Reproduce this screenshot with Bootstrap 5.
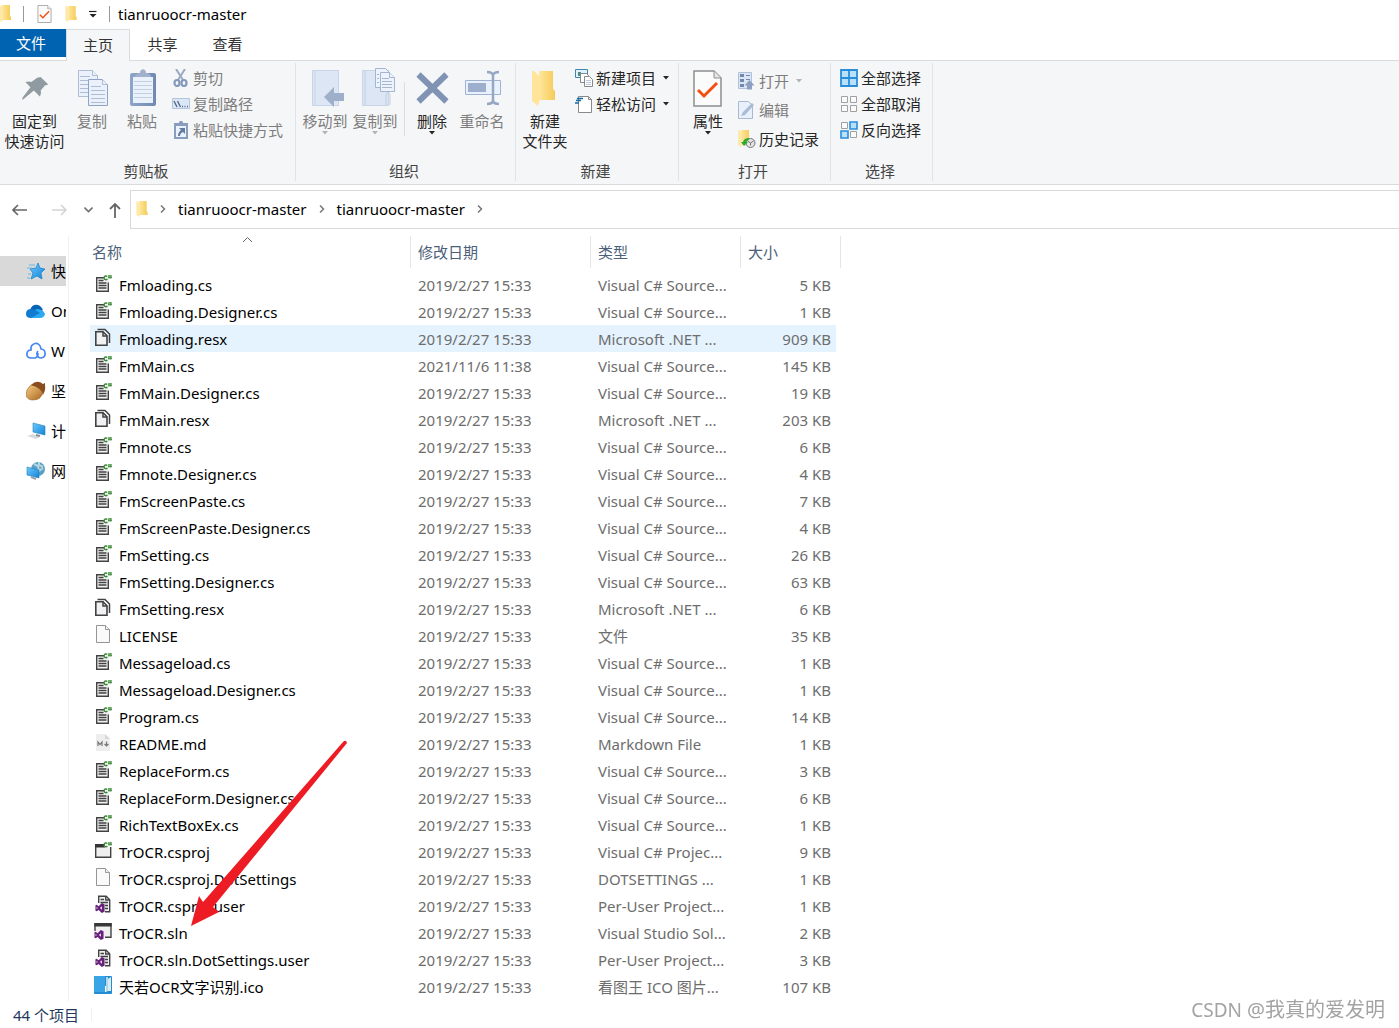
<!DOCTYPE html>
<html lang="zh-CN">
<head>
<meta charset="utf-8">
<meta name="viewport" content="width=device-width, initial-scale=1">
<title>tianruoocr-master</title>
<link href="https://cdn.jsdelivr.net/npm/bootstrap@5.3.0/dist/css/bootstrap.min.css" rel="stylesheet">
<style>
body{font-family:"Noto Sans","Noto Sans CJK SC",sans-serif;font-size:15px;line-height:20px;color:#000;background:#fff}
button{font:inherit;border:0;background:none;padding:0;color:inherit}
svg{display:block;flex:none}
a{color:inherit;text-decoration:none}
.titlebar{height:29px;gap:12px;padding-bottom:2px}
.titlebar .caption{margin-left:-4px}
.vline{width:1px;height:16px;background:#999}
.tabstrip{height:32px;border-bottom:1px solid #dadbdc}
.tabstrip button{width:65px;height:32px;padding-bottom:2px;color:#333}
.tabstrip .filetab{width:66px;height:28px;padding:0 4px 0 0;background:#0063b1;color:#fff}
.tabstrip .hometab{width:64px;border:1px solid #dadbdc;border-bottom:0;background:#f5f6f7}
.ribbon{height:124px;background:#f5f6f7;border-bottom:1px solid #dadbdc;color:#262626}
.rgroup{height:118px;margin-top:2px;border-right:1px solid #e2e3e4}
.rgroup h2{font-size:15px;line-height:20px;font-weight:400;margin:0;padding-right:3px;color:#444;text-align:center}
.g-clip{width:296px}
.g-org{width:220px}
.g-new{width:163px}
.g-open{width:152px}
.g-sel{width:102px}
.tools{padding-left:4px}
.g-clip .tools{padding-left:2px}
.bigbtn{width:50px;height:84px;padding-top:5px;display:flex;flex-direction:column;align-items:center;white-space:nowrap}
.bigbtn svg.pic{width:40px;height:40px;margin-bottom:3px}
.bigbtn.wide{width:65px}
.smallcol{display:flex;flex-direction:column;padding:2px 0 0 5px}
.smallcol button{height:26px;display:flex;align-items:center;gap:3px;white-space:nowrap}
.smallcol.loose{padding-top:3px}
.smallcol.loose button{height:29px}
.off{color:#7d7d7d!important}
.inner-rule{width:1px;height:54px;background:#dcdddf;margin:19px 2px 0 4px}
.navrow{height:44px;padding-top:5px}
.navtools{width:130px}
.addressbar{height:39px;border:1px solid #d9d9d9;border-right:0;padding:0 0 2px 5px;gap:12px}
.sidebar{width:69px;border-right:1px solid #f0f0f0;padding-top:20px}
.sidebar a{width:66px;height:30px;margin-bottom:10px;padding-left:26px;display:flex;align-items:center;gap:5px;overflow:hidden;white-space:nowrap}
.sidebar a.active{background:#d9d9d9}
.browser{padding-top:7px}
.filetable{width:751px;table-layout:fixed;border-collapse:separate;border-spacing:0;margin:0 0 0 21px}
.filetable>thead>tr>th{height:35px;padding:0;font-weight:400;color:#4c607a;vertical-align:top;position:relative}
.filetable th>span{display:flex;align-items:center;height:32px;border-right:1px solid #e5e5e5;padding-left:7px}
.filetable th:first-child>span{padding-left:2px}
.filetable>tbody>tr>td{height:27px;padding:0 0 0 7px;white-space:nowrap;overflow:hidden;vertical-align:middle;color:#6d6d6d}
.filetable>tbody>tr>td:first-child{padding-left:4px;color:#000}
.filetable>tbody>tr>td:last-child{text-align:right;padding:0 5px 0 0;border-right:5px solid transparent;background-clip:padding-box}
.filetable>tbody>tr.hot>td{background-color:#e5f3ff}
.fname{display:flex;align-items:center;gap:7px;height:27px}
.fname svg{margin-bottom:3px}
.c-name{width:321px}.c-date{width:180px}.c-type{width:150px}.c-size{width:100px}
.sorter{position:absolute;left:152px;top:0}
.statusline{height:27px;padding-left:13px;color:#1e395b}
.statusline i{width:1px;height:13px;background:#eee;margin-left:12px}
.pointer{position:absolute;left:190px;top:738px;pointer-events:none}
.watermark{position:fixed;right:14px;bottom:4px;font-size:20px;line-height:28px;color:#a3a3a3}
.watermark span{font-size:19px}
</style>
<script src="https://cdn.jsdelivr.net/npm/bootstrap@5.3.0/dist/js/bootstrap.bundle.min.js"></script>
</head>
<body class="position-relative">
<svg width="0" height="0" class="position-absolute" aria-hidden="true">
<defs>
<linearGradient id="gold" x1="0" x2="1"><stop offset="0" stop-color="#ffe69b"/><stop offset="1" stop-color="#f5cb58"/></linearGradient>
<linearGradient id="sky" x1="0" y1="0" x2="1" y2="1"><stop offset="0" stop-color="#6dcaff"/><stop offset="1" stop-color="#0f83d8"/></linearGradient>
<linearGradient id="slate" x1="0" x2="1"><stop offset="0" stop-color="#8fa5c9"/><stop offset="1" stop-color="#7089b1"/></linearGradient>
<linearGradient id="nut" x1="0" y1="0" x2="1" y2="1"><stop offset="0" stop-color="#f7cf82"/><stop offset="1" stop-color="#a86420"/></linearGradient>
</defs>
<symbol id="folder" viewBox="0 0 12 17"><path d="M3 0h8v11l1 1v3H3z" fill="url(#gold)"/><path d="M0 0h1l3 3v11l-1 3-3-2z" fill="#ffe9a8"/></symbol>
<symbol id="f-cs" viewBox="0 0 18 20"><path d="M2.700 4.700h12v13h-12z" fill="#f1f1f1"/><path d="M10 4.700H2.700v13.600h11.600V9.500" fill="none" stroke="#424242" stroke-width="1.400"/><path d="M4.500 7.500h5M4.500 10h8M4.500 12.500h8M4.500 15h8" stroke="#424242" stroke-width="1.300"/><path d="M13.300 3.600c-1-1.200-3.200-.8-3.200 1.200s2.200 2.400 3.200 1.200" fill="none" stroke="#388a34" stroke-width="1.500"/><path d="M15 2v3.600M16.800 2v3.600M14 3h4M14 4.600h4" stroke="#388a34" stroke-width=".9"/></symbol>
<symbol id="f-resx" viewBox="0 0 18 20"><path d="M1.800 4.800h7.200l4 4v9.500H1.800z" fill="#f1f1f4" stroke="#424242" stroke-width="1.600"/><path d="M9 4.800V9h4M3.500 2.500h7.500l4.500 4.500V16" fill="none" stroke="#424242" stroke-width="1.500"/></symbol>
<symbol id="f-page" viewBox="0 0 18 20"><path d="M2.500 1.500h9l4 4v13h-13z" fill="#fafafa" stroke="#959595"/><path d="M11.500 1.500v4h4" fill="#eee" stroke="#999"/></symbol>
<symbol id="f-md" viewBox="0 0 18 20"><path d="M2 2h9l5 5v12H2z" fill="#eee"/><path d="M11 2v5h5z" fill="#d7d7d7"/><path d="M4 14v-4l2 2.500L8 10v4M12.500 9.500v4M10.500 12l2 2 2-2" fill="none" stroke="#777" stroke-width="1.200"/></symbol>
<symbol id="f-proj" viewBox="0 0 18 20"><path d="M1.700 4.700h15v12.600h-15z" fill="#efeff0" stroke="#424242" stroke-width="1.400"/><path d="M1 4h10v3.500H1z" fill="#333"/><path d="M10.500 0H18v7h-7.500z" fill="#fff"/><path d="M13.300 3.600c-1-1.200-3.200-.8-3.200 1.200s2.200 2.400 3.200 1.200" fill="none" stroke="#388a34" stroke-width="1.500"/><path d="M15 2v3.600M16.800 2v3.600M14 3h4M14 4.600h4" stroke="#388a34" stroke-width=".9"/></symbol>
<symbol id="vs" viewBox="0 0 10 11"><path fill-rule="evenodd" d="M7 0l3 1.500v8L7 11 3.500 7.600 1.300 9.200 0 8.500v-6l1.300-.7 2.200 1.700zM7 3.500L5 5.500l2 2zM1.300 4.200v2.600l1.200-1.300z" fill="#68217a"/></symbol>
<symbol id="f-user" viewBox="0 0 18 20"><path d="M4.700 9V2.200h7.500l3.500 3.500v12H11" fill="#f0f0f1" stroke="#424242" stroke-width="1.400"/><path d="M11.700 2v4h4M6.500 5.500h3.500M6.500 8.500H14M11 11.500h3M11 14.500h3" fill="none" stroke="#424242" stroke-width="1.300"/><use href="#vs" x="1" y="9" width="10" height="10"/></symbol>
<symbol id="f-sln" viewBox="0 0 18 20"><path d="M1 10V3h16v13.300h-6" fill="#f0f0f1" stroke="#424242" stroke-width="1.400"/><path d="M.3 2h17.400v3.500H.3z" fill="#383838"/><use href="#vs" x="0" y="9" width="10" height="10"/></symbol>
<symbol id="f-ico" viewBox="0 0 18 20"><rect x="0" y="1" width="18" height="18" rx="1" fill="#238cd2"/><path d="M0 2q0-1 1-1h10v16H0z" fill="#39a4e6"/><path d="M12 2h2v14l-2 1z" fill="#b2d8ed"/><path d="M14 4l3-2v14h-3z" fill="#dceaf2"/><path d="M11 11h1v6h-1z" fill="#fff"/></symbol>
<symbol id="car" viewBox="0 0 6 4"><path d="M0 0h6L3 3.500z" fill="currentColor"/></symbol>
<symbol id="chev" viewBox="0 0 6 8"><path d="M1 .5L4.500 4 1 7.500" fill="none" stroke="#777" stroke-width="1.500"/></symbol>
<symbol id="check" viewBox="0 0 29 37"><path d="M1 1h20l7 7v28H1z" fill="#fbfbfb" stroke="#8f8f8f" stroke-width="1.500"/><path d="M21 1v7h7" fill="#e5e5e5" stroke="#8f8f8f"/><path d="M5 20l6 6 13-13" fill="none" stroke="#f2500f" stroke-width="3"/></symbol>
</svg>

<div class="d-flex flex-column min-vh-100">
<header>
  <div class="titlebar d-flex align-items-center">
    <svg width="11" height="17" viewBox="1 0 11 17"><use href="#folder" width="12" height="17"/></svg>
    <span class="vline"></span>
    <button aria-label="属性"><svg width="17" height="18"><use href="#check"/></svg></button>
    <button aria-label="新建文件夹"><svg width="12" height="16"><use href="#folder"/></svg></button>
    <button aria-label="自定义快速访问工具栏"><svg width="8" height="8" viewBox="0 0 8 8"><path d="M0 1.500h7.500" stroke="#222" stroke-width="1.200"/><path d="M.5 4h7L4 7.500z" fill="#222"/></svg></button>
    <span class="vline"></span>
    <span class="caption">tianruoocr-master</span>
  </div>
  <nav class="tabstrip d-flex">
    <button class="filetab">文件</button><button class="hometab">主页</button><button>共享</button><button>查看</button>
  </nav>
  <div class="ribbon d-flex">
    <section class="rgroup g-clip d-flex flex-column justify-content-between">
      <div class="tools d-flex">
        <button class="bigbtn wide"><svg class="pic" viewBox="0 0 40 40"><path d="M29 7l9 9-4 1-5 6c1 3 0 5-1 7l-7-7L9 33l-2 1 1-3 9-12-6-6c3-1 5-1 7 0l7-5z" transform="translate(1 3) scale(.85)" fill="#8f9aa1"/></svg><span>固定到<br>快速访问</span></button>
        <button class="bigbtn off"><svg class="pic" viewBox="0 0 40 40"><g fill="#eaf1fb" stroke="#aebdd5"><path d="M6.500 2.500h14l5 5v21h-19z"/><path d="M20.500 2.500v5h5"/><path d="M8 8.500h10M8 12.500h10M8 16.500h10M8 20.500h10M8 24.500h10"/><path d="M16.500 11.500h14l5 5v21h-19z" stroke="#8fa4c5"/><path d="M30.500 11.500v5h5"/><path d="M19 18.500h10M19 22.500h14M19 26.500h14M19 30.500h14M19 34.500h14"/></g></svg>复制</button>
        <button class="bigbtn off"><svg class="pic" viewBox="0 0 40 40"><rect x="8" y="5" width="26" height="33" rx="2" fill="url(#slate)"/><path d="M11 9h20v26H11z" fill="#e9f1fd"/><path d="M12 13.500h18M12 17.500h18M12 21.500h18M12 25.500h18M12 29.500h18" stroke="#c3cfe1"/><path d="M13 9c0-3 3-4 5-4 0-5 6-5 6 0 2 0 5 1 5 4z" fill="#a1b1cb"/></svg>粘贴</button>
        <div class="smallcol">
          <button class="off"><svg width="18" height="18" viewBox="0 0 18 18"><path d="M4 0l7 11M13 0L6 11" stroke="#9aa9c0" stroke-width="2"/><g fill="none" stroke="#8499bb" stroke-width="2.200"><ellipse cx="5" cy="14" rx="2.500" ry="3"/><ellipse cx="12" cy="14" rx="2.500" ry="3"/></g></svg>剪切</button>
          <button class="off"><svg width="18" height="18" viewBox="0 0 18 18"><path d="M.5 3.500h17v10H.5z" fill="#dce7f6" stroke="#b3c4dd"/><path d="M2 6l3 6M5.500 6l3 6M10 11.500h1M12.500 11.500h1M15 11.500h1" stroke="#506587" stroke-width="1.300"/></svg>复制路径</button>
          <button class="off"><svg width="18" height="18" viewBox="0 0 18 18"><path d="M2 2h14v16H2z" fill="#899dbe"/><path d="M4 5h10v11H4z" fill="#eaf2fd"/><path d="M5 4V2h2c0-3 4-3 4 0h2v2z" fill="#899dbe"/><path d="M7 7h6v6l-2-2c-2 1-3 2-3 4H6c0-3 1-4 3-6z" fill="#637ba2"/></svg>粘贴快捷方式</button>
        </div>
      </div>
      <h2>剪贴板</h2>
    </section>
    <section class="rgroup g-org d-flex flex-column justify-content-between">
      <div class="tools d-flex">
        <button class="bigbtn off"><svg class="pic" viewBox="0 0 40 40"><path d="M7.500 2.500h26v35h-26z" fill="#dce6f4" stroke="#c8d5e8"/><path d="M10 3v34" stroke="#c8d5e8"/><path d="M29 19v6h10v8H29v6l-10-10z" fill="#9eafca"/></svg>移动到<svg width="6" height="4" opacity=".55"><use href="#car"/></svg></button>
        <button class="bigbtn off"><svg class="pic" viewBox="0 0 40 40"><path d="M7.500 2.500h26v35h-26z" fill="#dce6f4" stroke="#c8d5e8"/><path d="M10 3v34M31 37V27q2-6 4 0v10" fill="none" stroke="#c0cde1"/><g fill="#edf3fc" stroke="#a4b5d0"><path d="M20.500.5h10l4 4v15h-14z"/><path d="M25.500 4.500h9l5 5v14h-14z"/><path d="M34.500 4.500v5h5M27 10.500h7M27 13.500h10M27 16.500h10M27 19.500h10M22 6.500h2M22 10.500h2M22 14.500h2"/></g></svg>复制到<svg width="6" height="4" opacity=".55"><use href="#car"/></svg></button>
        <span class="inner-rule"></span>
        <button class="bigbtn"><svg class="pic" viewBox="0 0 40 40"><path d="M6.500 6.500l28 27M34.500 6.500l-28 27" stroke="#8093b4" stroke-width="6"/></svg>删除<svg width="6" height="4"><use href="#car"/></svg></button>
        <button class="bigbtn off"><svg class="pic" viewBox="0 0 40 40"><path d="M3.500 12.500h35v14h-35z" fill="#e8f1fd" stroke="#a0b3d0"/><path d="M6 15h18v9H6z" fill="#9dafcd"/><path d="M25 4q5 0 6 3 1-3 6-3M31 6v28M25 36q5 0 6-3 1 3 6 3" fill="none" stroke="#95a7c3" stroke-width="2.500"/></svg>重命名</button>
      </div>
      <h2>组织</h2>
    </section>
    <section class="rgroup g-new d-flex flex-column justify-content-between">
      <div class="tools d-flex">
        <button class="bigbtn"><svg class="pic" viewBox="0 0 40 40"><path d="M14 3h14v18l2 2v9H14z" fill="url(#gold)"/><path d="M7 3h2l6 6v22l-2 7-6-5z" fill="#ffe49a"/></svg><span>新建<br>文件夹</span></button>
        <div class="smallcol">
          <button><svg width="18" height="18" viewBox="0 0 18 18"><path d="M.5.500h12v8H.500z" fill="#e1f3fa" stroke="#4186aa"/><path d="M3 3h3v4H3z" fill="#488d87"/><path d="M5.500 4.500h6l2 2v7h-8z" fill="#fff" stroke="#888"/><path d="M9.500 7.500h5l3 3v7h-8z" fill="#fff" stroke="#888"/><path d="M11 11.500h5M11 13.500h5M11 15.500h5" stroke="#bec7e3"/></svg>新建项目<svg class="ms-1" width="6" height="4"><use href="#car"/></svg></button>
          <button><svg width="18" height="18" viewBox="0 0 18 18"><path d="M3.500 1.500h10l3 3v13h-13z" fill="#fff" stroke="#898989"/><path d="M13.500 1.500v3h3" fill="none" stroke="#898989"/><path d="M2 3.500h6M1 5.500h5M0 8h4" stroke="#136ea5" stroke-width="1.300"/></svg>轻松访问<svg class="ms-1" width="6" height="4"><use href="#car"/></svg></button>
        </div>
      </div>
      <h2>新建</h2>
    </section>
    <section class="rgroup g-open d-flex flex-column justify-content-between">
      <div class="tools d-flex">
        <button class="bigbtn"><svg class="pic" viewBox="0 0 40 40"><use href="#check" x="5" y="2" width="29" height="37"/></svg>属性<svg width="6" height="4"><use href="#car"/></svg></button>
        <div class="smallcol loose">
          <button class="off"><svg width="18" height="18" viewBox="0 0 18 18"><path d="M.5.500h13v16H.5z" fill="#dbe6f5" stroke="#b3c1d8"/><path d="M2 2h4v3H2zM2 7h4v3H2zM2 12h4v3H2z" fill="#7288ae"/><path d="M8 3.500h4M8 7.500h4" stroke="#7288ae"/><path d="M11.500 8l5 5.500h-2.500v4H9v-4H6.500z" fill="#8da0c0"/></svg>打开<svg class="ms-1" width="6" height="4" opacity=".55"><use href="#car"/></svg></button>
          <button class="off"><svg width="18" height="18" viewBox="0 0 18 18"><path d="M.5.500h10l4 4v13H.500z" fill="#e8f0fb" stroke="#a9b9d1"/><path d="M3 15l2-4L14 2l2 2L7 14z" fill="#aabbd5"/></svg>编辑</button>
          <button><svg width="18" height="18" viewBox="0 0 18 18"><use href="#folder" width="12" height="17"/><circle cx="12.500" cy="13" r="4.500" fill="#e4e4e4" stroke="#777"/><path d="M12.500 13l-3-2M12.500 13l3-2M12.500 13v2.500" stroke="#777"/><path d="M11 8q-5 0-6 4H3l3 4 4-4H8q1-2 3-2z" fill="#2bab2b"/></svg>历史记录</button>
        </div>
      </div>
      <h2>打开</h2>
    </section>
    <section class="rgroup g-sel d-flex flex-column justify-content-between">
      <div class="tools d-flex">
      <div class="smallcol">
        <button><svg width="18" height="18" viewBox="0 0 18 18"><path d="M1 1h16v16H1zM9 1v16M1 9h16" fill="#b9e1fc" stroke="#2a8ddb" stroke-width="1.800"/></svg>全部选择</button>
        <button><svg width="18" height="18" viewBox="0 0 18 18"><path d="M1.500 1.500h6v6h-6zM10.500 1.500h6v6h-6zM1.500 10.500h6v6h-6zM10.500 10.500h6v6h-6z" fill="#fbfbfb" stroke="#a0a0a0"/></svg>全部取消</button>
        <button><svg width="18" height="18" viewBox="0 0 18 18"><path d="M1.500 1.500h6v6h-6zM10.500 10.500h6v6h-6z" fill="#fbfbfb" stroke="#a0a0a0"/><path d="M10 1h7v7h-7zM1 10h7v7H1z" fill="#b9e1fc" stroke="#2a8ddb" stroke-width="1.600"/></svg>反向选择</button>
      </div>
      </div>
      <h2>选择</h2>
    </section>
  </div>
  <div class="navrow d-flex">
    <div class="navtools d-flex align-items-center">
      <button aria-label="后退" class="ps-2 ms-1"><svg width="16" height="14" viewBox="0 0 16 14"><path d="M15 7H1M6 2L1 7l5 5" fill="none" stroke="#666" stroke-width="1.600"/></svg></button>
      <button aria-label="前进" class="ps-4"><svg width="16" height="14" viewBox="0 0 16 14"><path d="M0 7h14M9 2l5 5-5 5" fill="none" stroke="#d4d4d4" stroke-width="1.600"/></svg></button>
      <button aria-label="最近的位置" class="ps-3"><svg width="9" height="7" viewBox="0 0 9 7"><path d="M.5 1.500l4 4 4-4" fill="none" stroke="#707070" stroke-width="1.600"/></svg></button>
      <button aria-label="上移" class="ps-3"><svg width="12" height="16" viewBox="0 0 12 16"><path d="M6 16V2M1 7l5-5 5 5" fill="none" stroke="#666" stroke-width="1.800"/></svg></button>
    </div>
    <nav class="addressbar d-flex align-items-center flex-grow-1">
      <svg width="12" height="16"><use href="#folder"/></svg>
      <svg width="6" height="8"><use href="#chev"/></svg>
      <a href="#">tianruoocr-master</a>
      <svg width="6" height="8"><use href="#chev"/></svg>
      <a href="#">tianruoocr-master</a>
      <svg width="6" height="8"><use href="#chev"/></svg>
    </nav>
  </div>
</header>

<main class="browser d-flex flex-grow-1">
  <nav class="sidebar flex-shrink-0">
    <a href="#" class="active"><svg width="20" height="20" viewBox="0 0 20 20"><path d="M12 2l2 5 5 1-4 4 1 6-5-3-6 3 2-6-3-4 6-1z" fill="url(#sky)" stroke="#1580c8" stroke-width=".7"/><path d="M3 4h6M1 7h5M2 13h3M1 17h3" stroke="#68b7e8"/></svg>快</a>
    <a href="#"><svg width="20" height="20" viewBox="0 0 20 20"><path d="M4 9c2-7 10-7 13 0l-7 5z" fill="#0864b5"/><path d="M10 8q7 0 9 5-1 4-5 4H5z" fill="#2aaaf0"/><path d="M0 13q0-5 5-5 3 0 9 4l-9 5q-5 0-5-4" fill="#107bd1"/></svg>On</a>
    <a href="#"><svg width="20" height="20" viewBox="0 0 20 20"><path d="M5 17C-1 17 0 9 5 9 4 1 14 0 15 8c5 0 6 9 0 9-4 0-5-5-3-7M5 17h4q3-1 3-5" fill="none" stroke="#4285f4" stroke-width="1.700"/></svg>W</a>
    <a href="#"><svg width="20" height="20" viewBox="0 0 20 20"><path d="M5 4Q0 8 0 14q1 5 7 5 9 0 10-9-4-7-12-6" fill="url(#nut)" stroke="#9c6228" stroke-width=".6"/><path d="M5 4q6-6 12-1l2-1v3q1 4-2 9-1-7-12-10" fill="#8a4d20"/></svg>坚</a>
    <a href="#"><svg width="20" height="20" viewBox="0 0 20 20"><path d="M7 2l12 3v9L7 11z" fill="url(#sky)" stroke="#257fb7" stroke-width=".6"/><path d="M1 15l6-2 7 3-4 2z" fill="#d5dce0"/><path d="M10 14l4 1" stroke="#87939a" stroke-width="2"/></svg>计</a>
    <a href="#"><svg width="20" height="20" viewBox="0 0 20 20"><circle cx="12" cy="8" r="7" fill="#5c9fc2"/><path d="M8 3l4 2 1 5 4-3M13 1v3l4 2" stroke="#b4d6e0" stroke-width="2" fill="none"/><path d="M1 6l12 3v8L1 14z" fill="url(#sky)" stroke="#257fb7" stroke-width=".6"/><path d="M5 16l5 2" stroke="#96a5ad" stroke-width="2"/></svg>网</a>
  </nav>
  <div>
  <table class="table table-borderless filetable">
    <colgroup><col class="c-name"><col class="c-date"><col class="c-type"><col class="c-size"></colgroup>
    <thead><tr><th><span>名称</span><svg class="sorter" width="11" height="7" viewBox="0 0 11 7"><path d="M1 6l4.500-4.500L10 6" fill="none" stroke="#666"/></svg></th><th><span>修改日期</span></th><th><span>类型</span></th><th><span>大小</span></th></tr></thead>
    <tbody>
    <tr><td><div class="fname"><svg width="18" height="20"><use href="#f-cs"/></svg>Fmloading.cs</div></td><td>2019/2/27 15:33</td><td>Visual C# Source...</td><td>5 KB</td></tr>
    <tr><td><div class="fname"><svg width="18" height="20"><use href="#f-cs"/></svg>Fmloading.Designer.cs</div></td><td>2019/2/27 15:33</td><td>Visual C# Source...</td><td>1 KB</td></tr>
    <tr class="hot"><td><div class="fname"><svg width="18" height="20"><use href="#f-resx"/></svg>Fmloading.resx</div></td><td>2019/2/27 15:33</td><td>Microsoft .NET ...</td><td>909 KB</td></tr>
    <tr><td><div class="fname"><svg width="18" height="20"><use href="#f-cs"/></svg>FmMain.cs</div></td><td>2021/11/6 11:38</td><td>Visual C# Source...</td><td>145 KB</td></tr>
    <tr><td><div class="fname"><svg width="18" height="20"><use href="#f-cs"/></svg>FmMain.Designer.cs</div></td><td>2019/2/27 15:33</td><td>Visual C# Source...</td><td>19 KB</td></tr>
    <tr><td><div class="fname"><svg width="18" height="20"><use href="#f-resx"/></svg>FmMain.resx</div></td><td>2019/2/27 15:33</td><td>Microsoft .NET ...</td><td>203 KB</td></tr>
    <tr><td><div class="fname"><svg width="18" height="20"><use href="#f-cs"/></svg>Fmnote.cs</div></td><td>2019/2/27 15:33</td><td>Visual C# Source...</td><td>6 KB</td></tr>
    <tr><td><div class="fname"><svg width="18" height="20"><use href="#f-cs"/></svg>Fmnote.Designer.cs</div></td><td>2019/2/27 15:33</td><td>Visual C# Source...</td><td>4 KB</td></tr>
    <tr><td><div class="fname"><svg width="18" height="20"><use href="#f-cs"/></svg>FmScreenPaste.cs</div></td><td>2019/2/27 15:33</td><td>Visual C# Source...</td><td>7 KB</td></tr>
    <tr><td><div class="fname"><svg width="18" height="20"><use href="#f-cs"/></svg>FmScreenPaste.Designer.cs</div></td><td>2019/2/27 15:33</td><td>Visual C# Source...</td><td>4 KB</td></tr>
    <tr><td><div class="fname"><svg width="18" height="20"><use href="#f-cs"/></svg>FmSetting.cs</div></td><td>2019/2/27 15:33</td><td>Visual C# Source...</td><td>26 KB</td></tr>
    <tr><td><div class="fname"><svg width="18" height="20"><use href="#f-cs"/></svg>FmSetting.Designer.cs</div></td><td>2019/2/27 15:33</td><td>Visual C# Source...</td><td>63 KB</td></tr>
    <tr><td><div class="fname"><svg width="18" height="20"><use href="#f-resx"/></svg>FmSetting.resx</div></td><td>2019/2/27 15:33</td><td>Microsoft .NET ...</td><td>6 KB</td></tr>
    <tr><td><div class="fname"><svg width="18" height="20"><use href="#f-page"/></svg>LICENSE</div></td><td>2019/2/27 15:33</td><td>文件</td><td>35 KB</td></tr>
    <tr><td><div class="fname"><svg width="18" height="20"><use href="#f-cs"/></svg>Messageload.cs</div></td><td>2019/2/27 15:33</td><td>Visual C# Source...</td><td>1 KB</td></tr>
    <tr><td><div class="fname"><svg width="18" height="20"><use href="#f-cs"/></svg>Messageload.Designer.cs</div></td><td>2019/2/27 15:33</td><td>Visual C# Source...</td><td>1 KB</td></tr>
    <tr><td><div class="fname"><svg width="18" height="20"><use href="#f-cs"/></svg>Program.cs</div></td><td>2019/2/27 15:33</td><td>Visual C# Source...</td><td>14 KB</td></tr>
    <tr><td><div class="fname"><svg width="18" height="20"><use href="#f-md"/></svg>README.md</div></td><td>2019/2/27 15:33</td><td>Markdown File</td><td>1 KB</td></tr>
    <tr><td><div class="fname"><svg width="18" height="20"><use href="#f-cs"/></svg>ReplaceForm.cs</div></td><td>2019/2/27 15:33</td><td>Visual C# Source...</td><td>3 KB</td></tr>
    <tr><td><div class="fname"><svg width="18" height="20"><use href="#f-cs"/></svg>ReplaceForm.Designer.cs</div></td><td>2019/2/27 15:33</td><td>Visual C# Source...</td><td>6 KB</td></tr>
    <tr><td><div class="fname"><svg width="18" height="20"><use href="#f-cs"/></svg>RichTextBoxEx.cs</div></td><td>2019/2/27 15:33</td><td>Visual C# Source...</td><td>1 KB</td></tr>
    <tr><td><div class="fname"><svg width="18" height="20"><use href="#f-proj"/></svg>TrOCR.csproj</div></td><td>2019/2/27 15:33</td><td>Visual C# Projec...</td><td>9 KB</td></tr>
    <tr><td><div class="fname"><svg width="18" height="20"><use href="#f-page"/></svg>TrOCR.csproj.DotSettings</div></td><td>2019/2/27 15:33</td><td>DOTSETTINGS ...</td><td>1 KB</td></tr>
    <tr><td><div class="fname"><svg width="18" height="20"><use href="#f-user"/></svg>TrOCR.csproj.user</div></td><td>2019/2/27 15:33</td><td>Per-User Project...</td><td>1 KB</td></tr>
    <tr><td><div class="fname"><svg width="18" height="20"><use href="#f-sln"/></svg>TrOCR.sln</div></td><td>2019/2/27 15:33</td><td>Visual Studio Sol...</td><td>2 KB</td></tr>
    <tr><td><div class="fname"><svg width="18" height="20"><use href="#f-user"/></svg>TrOCR.sln.DotSettings.user</div></td><td>2019/2/27 15:33</td><td>Per-User Project...</td><td>3 KB</td></tr>
    <tr><td><div class="fname"><svg width="18" height="20"><use href="#f-ico"/></svg>天若OCR文字识别.ico</div></td><td>2019/2/27 15:33</td><td>看图王 ICO 图片...</td><td>107 KB</td></tr>
    </tbody>
  </table>
  </div>
</main>
<footer class="statusline d-flex align-items-center"><span>44 个项目</span><i></i></footer>
</div>
<svg class="pointer" width="160" height="190" viewBox="190 738 160 190"><path d="M191 926l8-30 4 6L343 742q3-3 4 1L213 907l6 5z" fill="#ed1c24"/></svg>
<div class="watermark"><span>CSDN </span>@我真的爱发明</div>
</body>
</html>
